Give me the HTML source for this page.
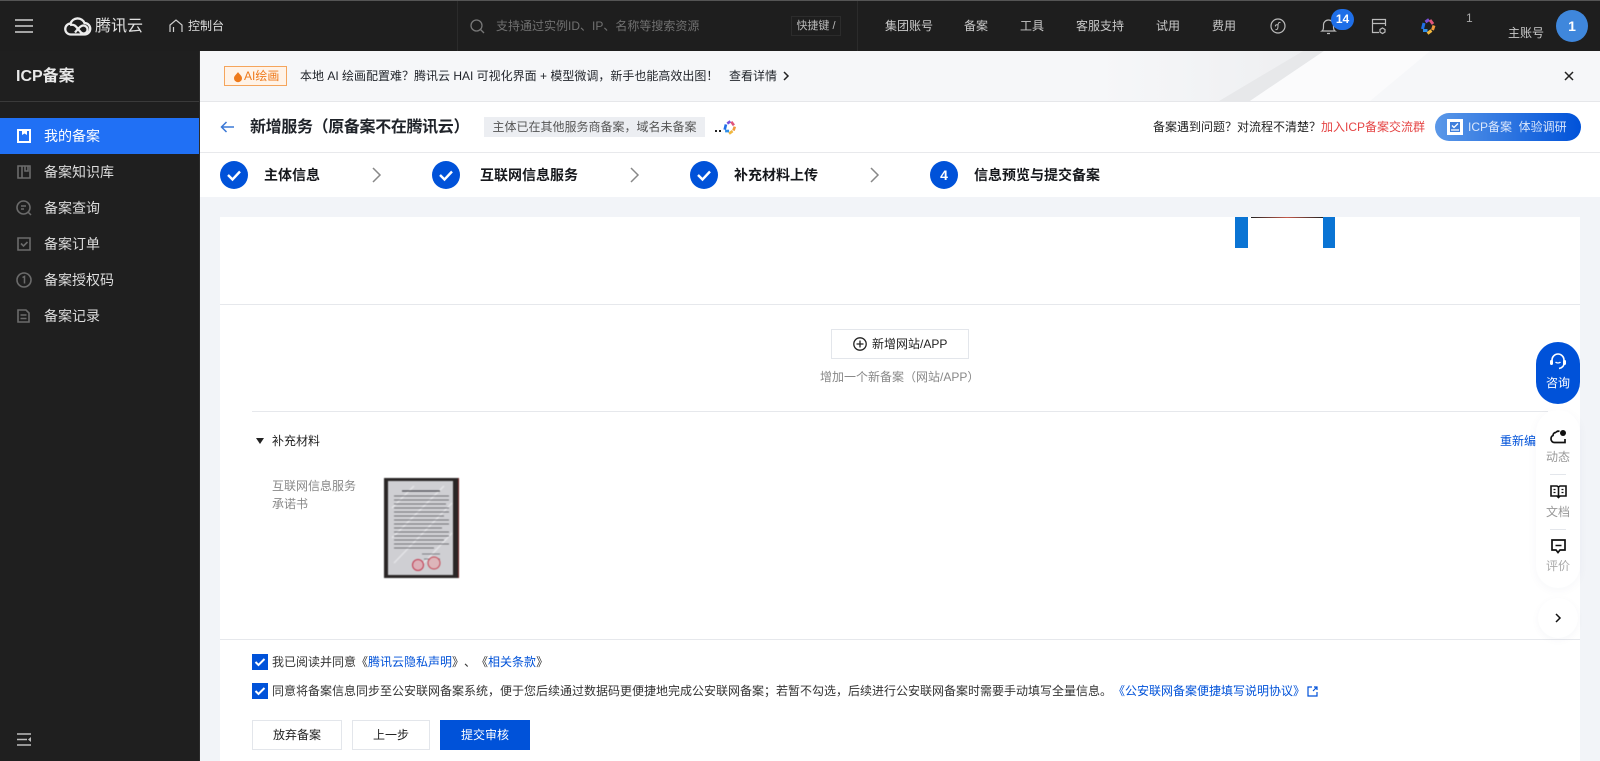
<!DOCTYPE html>
<html lang="zh-CN"><head><meta charset="utf-8"><title>ICP备案</title>
<style>
*{box-sizing:border-box}
html,body{margin:0;padding:0;width:1600px;height:761px;overflow:hidden;background:#f2f4f8;font-family:"Liberation Sans","Noto Sans CJK SC",sans-serif;color:#000;text-spacing-trim:space-all}
.t{position:absolute;white-space:nowrap;line-height:20px;font-size:12px}
.b{position:absolute}
svg{position:absolute;overflow:visible}
.nav{color:#c9c9c9;font-size:12px;top:16px}
.side{left:44px;font-size:14px;color:#dcdcdc}
.step{font-size:14px;font-weight:700;color:#16181c;top:165px}
.btn{position:absolute;top:720px;height:30px;background:#fff;border:1px solid #e3e6eb;font-size:12px;line-height:28px;text-align:center;color:#222}
.cb{position:absolute;left:252px;width:16px;height:16px;background:#0052d9}
a{color:#0052d9;text-decoration:none}
</style></head><body>

<!-- header -->
<div class="b" style="left:0;top:0;width:1600px;height:51px;background:#1e1e1e;border-top:1px solid #555"></div>
<div class="b" style="left:457px;top:1px;width:1px;height:50px;background:#2b2b2b"></div>
<div class="b" style="left:857px;top:1px;width:1px;height:50px;background:#2b2b2b"></div>
<svg style="left:15px;top:19px" width="18" height="14"><path d="M0 1h18M0 7h18M0 13h18" stroke="#d0d0d0" stroke-width="1.600" fill="none"/></svg>
<svg style="left:64px;top:16px" width="27" height="20" viewBox="0 0 27 20"><path d="M7 18.500a5.500 5.500 0 0 1-.5-11A7.500 7.500 0 0 1 20.500 7a5.700 5.700 0 0 1 0 11.500H7zM6 9c4-1 6 1 8 4l3 3.500c2 2 6 1 6.500-2.500.4-3-3-5.500-6-4-2 1-4 3.500-6.500 6.500" fill="none" stroke="#ececec" stroke-width="2.300"/></svg>
<div class="t" style="left:95px;top:17px;font-size:16px;color:#e0e0e0">腾讯云</div>
<svg style="left:169px;top:19px" width="14" height="14" viewBox="0 0 14 14"><path d="M1 13V6l6-5 6 5v7M4.500 13V8" fill="none" stroke="#cfcfcf" stroke-width="1.200"/></svg>
<div class="t" style="left:188px;top:16px;color:#dedede">控制台</div>
<svg style="left:470px;top:19px" width="15" height="15" viewBox="0 0 15 15"><circle cx="6.500" cy="6.500" r="5.500" fill="none" stroke="#777" stroke-width="1.300"/><path d="M10.500 10.500l3.500 3.500" stroke="#777" stroke-width="1.300"/></svg>
<div class="t" style="left:496px;top:16px;color:#707070">支持通过实例ID、IP、名称等搜索资源</div>
<div class="t" style="left:791px;top:16px;width:50px;height:20px;border:1px solid #2c2c2c;font-size:11px;color:#bbb;line-height:18px;text-align:center">快捷键 /</div>
<div class="t nav" style="left:885px">集团账号</div>
<div class="t nav" style="left:964px">备案</div>
<div class="t nav" style="left:1020px">工具</div>
<div class="t nav" style="left:1076px">客服支持</div>
<div class="t nav" style="left:1156px">试用</div>
<div class="t nav" style="left:1212px">费用</div>
<svg style="left:1270px;top:18px" width="16" height="16" viewBox="0 0 16 16"><circle cx="8" cy="8" r="7" fill="none" stroke="#bbb" stroke-width="1.200"/><path d="M10.500 4.500C8.500 4 8 5.500 8 8s-.5 4-2.500 3.500M5.500 8.500c-.5-1.500 1-2 2.500-1.500" fill="none" stroke="#bbb" stroke-width="1"/></svg>
<svg style="left:1321px;top:18px" width="15" height="17" viewBox="0 0 15 17"><path d="M1 13c1.500-1 1.500-2.500 1.500-6a5 5 0 0 1 10 0c0 3.500 0 5 1.500 6zM6 15.500h3" fill="none" stroke="#bbb" stroke-width="1.200"/></svg>
<div class="b" style="left:1331px;top:9px;width:23px;height:21px;border-radius:11px;background:#1f6fe8;color:#fff;font-size:12px;font-weight:700;line-height:21px;text-align:center">14</div>
<svg style="left:1371px;top:18px" width="17" height="17" viewBox="0 0 17 17"><path d="M14.500 8V1.500h-13v13H8M1.500 5.500h13M11.500 10l2.500 1.500v2.500L11.500 15.500 9 14v-2.500z" fill="none" stroke="#bbb" stroke-width="1.200"/></svg>
<svg style="left:1420px;top:18px" width="16" height="17" viewBox="0 0 16 17" fill="none" stroke-width="3"><path d="M9 1.500L5.500 4" stroke="#7a4fd8"/><path d="M10 2l3 4" stroke="#e0567a"/><path d="M14 7.500l-1.500 4.500" stroke="#f09a3e"/><path d="M11.500 12.500l-4 3" stroke="#f0b83e"/><path d="M7.500 12.500H3" stroke="#2f8fe8"/><path d="M2.500 11l1.500-6" stroke="#1f6fe8"/></svg>
<div class="t" style="left:1466px;top:8px;font-size:12px;color:#aaa">1</div>
<div class="t" style="left:1508px;top:23px;color:#c9c9c9">主账号</div>
<div class="b" style="left:1556px;top:10px;width:32px;height:32px;border-radius:50%;background:#3f87dc;color:#fff;font-size:14px;font-weight:700;line-height:32px;text-align:center">1</div>

<!-- sidebar -->
<div class="b" style="left:0;top:51px;width:199px;height:710px;background:#1f1f1f"></div>
<div class="b" style="left:199px;top:51px;width:1px;height:710px;background:#2c2c2c"></div>
<div class="t" style="left:16px;top:67px;font-size:16px;font-weight:700;color:#e8e8e8">ICP备案</div>
<div class="b" style="left:0;top:101px;width:199px;height:1px;background:#3a3a3a"></div>
<div class="b" style="left:0;top:118px;width:199px;height:36px;background:#2070f5"></div>
<svg style="left:17px;top:129px" width="14" height="14" viewBox="0 0 14 14"><path fill="#fff" fill-rule="evenodd" d="M0 0h14v14H0zM2 2v10h10V2h-2v4L7.500 4.500 5 6V2z"/></svg>
<div class="t side" style="top:126px;color:#fff">我的备案</div>
<svg style="left:17px;top:165px" width="14" height="14" viewBox="0 0 14 14"><path fill="none" stroke="#6b6b6b" stroke-width="1.600" d="M1 1h12v12H1zM5 1v12M8 1v5h3V1"/></svg>
<div class="t side" style="top:162px">备案知识库</div>
<svg style="left:16px;top:200px" width="16" height="16" viewBox="0 0 16 16"><circle cx="7.500" cy="7.500" r="6.500" fill="none" stroke="#6b6b6b" stroke-width="1.600"/><path d="M12 12l3 3M5 6h5M5 9h3" stroke="#6b6b6b" stroke-width="1.500"/></svg>
<div class="t side" style="top:198px">备案查询</div>
<svg style="left:17px;top:237px" width="14" height="14" viewBox="0 0 14 14"><path fill="none" stroke="#6b6b6b" stroke-width="1.600" d="M1 1h12v12H1zM4 6.500l2.500 2.500L10.500 5"/></svg>
<div class="t side" style="top:234px">备案订单</div>
<svg style="left:16px;top:272px" width="16" height="16" viewBox="0 0 16 16"><circle cx="8" cy="8" r="7" fill="none" stroke="#6b6b6b" stroke-width="1.600"/><path d="M6.500 5.500L8.500 4.500V11.500" fill="none" stroke="#6b6b6b" stroke-width="1.500"/></svg>
<div class="t side" style="top:270px">备案授权码</div>
<svg style="left:17px;top:309px" width="13" height="14" viewBox="0 0 13 14"><path fill="none" stroke="#6b6b6b" stroke-width="1.600" d="M1 1h8l3 3v9H1zM3.500 6h6M3.500 9.500h6"/></svg>
<div class="t side" style="top:306px">备案记录</div>
<svg style="left:17px;top:733px" width="14" height="13" viewBox="0 0 14 13"><path d="M0 1h14M0 6.500h10M0 12h14" stroke="#bdbdbd" stroke-width="1.400"/><path d="M14 4v5l-3-2.500z" fill="#bdbdbd"/></svg>

<!-- banner -->
<div class="b" style="left:200px;top:51px;width:1400px;height:51px;background:#f6f7f9;border-bottom:1px solid #e6e7ea;overflow:hidden">
<svg style="left:1000px;top:0" width="400" height="50"><defs><linearGradient id="g" x1="0" x2="1" y1="0" y2="0"><stop offset="0" stop-color="#f6f7f9"/><stop offset="1" stop-color="#eeeff1"/></linearGradient></defs><polygon points="-100,0 103,0 19,50 -100,50" fill="url(#g)"/><polygon points="103,0 124,0 50,50 19,50" fill="#e7e8ea"/><polygon points="124,0 230,0 170,50 50,50" fill="#fbfbfc"/></svg></div>
<div class="b" style="left:224px;top:66px;width:63px;height:20px;background:#fff3e8;border:1px solid #f5a55c;color:#ee7a1c;font-size:12px;line-height:18px;padding-left:7px;white-space:nowrap"><svg style="left:9px;top:5px" width="8" height="10" viewBox="0 0 8 10"><path d="M4 0c1 2 4 3.500 4 6.200A4 4 0 0 1 0 6.200C0 3.500 3 2 4 0z" fill="#ee7a1c"/></svg><span style="margin-left:12px">AI绘画</span></div>
<div class="t" style="left:300px;top:66px;color:#1f2329">本地 AI 绘画配置难？腾讯云 HAI 可视化界面 + 模型微调，新手也能高效出图！</div>
<div class="t" style="left:729px;top:66px;color:#1f2329">查看详情</div>
<svg style="left:783px;top:71px" width="6" height="10"><path d="M1 1l4 4-4 4" fill="none" stroke="#222" stroke-width="1.500"/></svg>
<svg style="left:1564px;top:71px" width="10" height="10"><path d="M1 1l8 8M9 1l-8 8" stroke="#222" stroke-width="1.500"/></svg>

<!-- page head -->
<div class="b" style="left:200px;top:102px;width:1400px;height:51px;background:#fff;border-bottom:1px solid #e8e9ec"></div>
<svg style="left:220px;top:121px" width="14" height="12"><path d="M14 6H1.500M6.500 1L1.500 6l5 5" fill="none" stroke="#3a78d6" stroke-width="1.500"/></svg>
<div class="t" style="left:250px;top:117px;font-size:16px;font-weight:700;color:#1f2329;line-height:22px;letter-spacing:-.35px">新增服务（原备案不在腾讯云）</div>
<div class="b" style="left:484px;top:117px;width:221px;height:20px;background:#eceef2;font-size:12px;color:#555;line-height:20px;text-align:center;white-space:nowrap">主体已在其他服务商备案，域名未备案</div>
<div class="b" style="left:715px;top:130px;width:2px;height:2px;background:#222"></div><div class="b" style="left:719px;top:130px;width:2px;height:2px;background:#222"></div>
<svg style="left:722px;top:120px" width="15" height="15" viewBox="0 0 16 17" fill="none" stroke-width="3"><path d="M9 1.500L5.500 4" stroke="#7a4fd8"/><path d="M10 2l3 4" stroke="#e0567a"/><path d="M14 7.500l-1.500 4.500" stroke="#f09a3e"/><path d="M11.500 12.500l-4 3" stroke="#f0b83e"/><path d="M7.500 12.500H3" stroke="#2f8fe8"/><path d="M2.500 11l1.500-6" stroke="#1f6fe8"/></svg>
<div class="t" style="left:1153px;top:117px;color:#222">备案遇到问题？对流程不清楚？</div>
<div class="t" style="left:1321px;top:117px;color:#e54545">加入ICP备案交流群</div>
<div class="b" style="left:1435px;top:113px;width:146px;height:28px;border-radius:14px;background:linear-gradient(90deg,#5b98e8,#0052d9)"></div>
<svg style="left:1447px;top:119px" width="16" height="16" viewBox="0 0 16 16"><rect width="16" height="16" fill="#fff"/><path d="M3 3h10v10H3z" fill="#3f7fdc"/><path d="M5 6.500l2 2 4-4M4 11h8" stroke="#fff" stroke-width="1.300" fill="none"/></svg>
<div class="t" style="left:1468px;top:117px;color:#dbe7fb">ICP备案&nbsp; 体验调研</div>

<!-- steps -->
<div class="b" style="left:200px;top:153px;width:1400px;height:44px;background:#fff"></div>
<svg style="left:220px;top:161px" width="28" height="28"><circle cx="14" cy="14" r="14" fill="#0052d9"/><path d="M8 14l4.500 4.500L20 10.500" fill="none" stroke="#fff" stroke-width="2.400"/></svg>
<div class="t step" style="left:264px">主体信息</div>
<svg style="left:372px;top:167px" width="9" height="16"><path d="M1 1l7 7-7 7" fill="none" stroke="#888" stroke-width="1.500"/></svg>
<svg style="left:432px;top:161px" width="28" height="28"><circle cx="14" cy="14" r="14" fill="#0052d9"/><path d="M8 14l4.500 4.500L20 10.500" fill="none" stroke="#fff" stroke-width="2.400"/></svg>
<div class="t step" style="left:480px">互联网信息服务</div>
<svg style="left:630px;top:167px" width="9" height="16"><path d="M1 1l7 7-7 7" fill="none" stroke="#888" stroke-width="1.500"/></svg>
<svg style="left:690px;top:161px" width="28" height="28"><circle cx="14" cy="14" r="14" fill="#0052d9"/><path d="M8 14l4.500 4.500L20 10.500" fill="none" stroke="#fff" stroke-width="2.400"/></svg>
<div class="t step" style="left:734px">补充材料上传</div>
<svg style="left:870px;top:167px" width="9" height="16"><path d="M1 1l7 7-7 7" fill="none" stroke="#888" stroke-width="1.500"/></svg>
<div class="b" style="left:930px;top:161px;width:28px;height:28px;border-radius:50%;background:#0052d9;color:#fff;font-size:14px;font-weight:700;line-height:28px;text-align:center">4</div>
<div class="t step" style="left:974px">信息预览与提交备案</div>

<!-- card -->
<div class="b" style="left:220px;top:217px;width:1360px;height:544px;background:#fff"></div>
<div class="b" style="left:1235px;top:217px;width:13px;height:31px;background:#0a74d4"></div>
<div class="b" style="left:1323px;top:217px;width:12px;height:31px;background:#0a74d4"></div>
<div class="b" style="left:1251px;top:217px;width:72px;height:1px;background:linear-gradient(90deg,#222,#c65a4a,#222)"></div>
<div class="b" style="left:220px;top:304px;width:1360px;height:1px;background:#e6e8ec"></div>
<div class="b" style="left:831px;top:329px;width:138px;height:30px;border:1px solid #e3e6eb;background:#fff"></div>
<svg style="left:853px;top:337px" width="14" height="14"><circle cx="7" cy="7" r="6.200" fill="none" stroke="#222" stroke-width="1.300"/><path d="M7 3.500v7M3.500 7h7" stroke="#222" stroke-width="1.300"/></svg>
<div class="t" style="left:872px;top:334px;color:#222">新增网站/APP</div>
<div class="t" style="left:820px;top:367px;color:#888">增加一个新备案（网站/APP）</div>
<div class="b" style="left:252px;top:411px;width:1296px;height:1px;background:#e6e8ec"></div>
<svg style="left:256px;top:438px" width="8" height="6"><path d="M0 0h8L4 6z" fill="#222"/></svg>
<div class="t" style="left:272px;top:431px;color:#222">补充材料</div>
<div class="t" style="left:1500px;top:431px;color:#0052d9">重新编</div>
<div class="t" style="left:272px;top:477px;color:#888;line-height:18px">互联网信息服务<br>承诺书</div>
<svg style="left:384px;top:478px" width="75" height="100" viewBox="0 0 75 100"><g style="filter:blur(.45px)"><rect width="75" height="100" fill="#2a2626"/><rect x="74" width="1" height="100" fill="#6b1f1f"/><rect x="4" y="3" width="65" height="94" fill="#cfcfd3"/><path d="M8 30L30 8M8 60L60 8M10 85L68 25M35 90L68 55" stroke="#e4e4e7" stroke-width="1.500"/><g stroke="#4a4a50" stroke-width=".9"><path d="M18 13h38" stroke-width="1.300"/><path d="M10 18h55M10 22h55M10 26h52M10 30h55M10 34h55M10 38h50M10 42h55M10 46h55M10 50h48M10 54h55M10 58h55M10 62h50M10 66h55M10 70h40" opacity=".7"/><path d="M38 76h18M40 81h16" opacity=".6"/></g><circle cx="34" cy="87" r="5.500" fill="#dcb0b8" stroke="#c23a50"/><circle cx="50" cy="85" r="6" fill="#ddb6ba" stroke="#c44a58"/></g></svg>

<div class="b" style="left:220px;top:639px;width:1360px;height:1px;background:#e6e8ec"></div>
<div class="cb" style="top:654px"><svg style="left:0;top:0" width="16" height="16"><path d="M3.500 8l3 3 6-6" fill="none" stroke="#fff" stroke-width="2"/></svg></div>
<div class="t" style="left:272px;top:652px;color:#333">我已阅读并同意《<a>腾讯云隐私声明</a>》、《<a>相关条款</a>》</div>
<div class="cb" style="top:683px"><svg style="left:0;top:0" width="16" height="16"><path d="M3.500 8l3 3 6-6" fill="none" stroke="#fff" stroke-width="2"/></svg></div>
<div class="t" style="left:272px;top:681px;color:#333">同意将备案信息同步至公安联网备案系统，便于您后续通过数据码更便捷地完成公安联网备案；若暂不勾选，后续进行公安联网备案时需要手动填写全量信息。</div>
<div class="t" style="left:1113px;top:681px;color:#0052d9">《公安联网备案便捷填写说明协议》</div>
<svg style="left:1307px;top:686px" width="11" height="11"><path d="M5 1H1v9h9V6M6 5l4-4M7 1h3v3" fill="none" stroke="#0052d9" stroke-width="1.200"/></svg>
<div class="btn" style="left:252px;width:90px">放弃备案</div>
<div class="btn" style="left:352px;width:78px">上一步</div>
<div class="btn" style="left:440px;width:90px;background:#0052d9;border-color:#0052d9;color:#fff">提交审核</div>

<!-- floating -->
<div class="b" style="left:1536px;top:342px;width:44px;height:62px;border-radius:22px;background:#0052d9"></div>
<svg style="left:1549px;top:353px" width="18" height="17" viewBox="0 0 18 17"><path d="M3 10V7a6 6 0 0 1 12 0v3c0 3-2 5-5 5.500" fill="none" stroke="#fff" stroke-width="1.600"/><rect x="1" y="7" width="3" height="5" rx="1.200" fill="#fff"/><rect x="14" y="7" width="3" height="5" rx="1.200" fill="#fff"/><path d="M6.500 9c1 1.300 4 1.300 5 0" fill="none" stroke="#fff" stroke-width="1.300"/></svg>
<div class="t" style="left:1546px;top:373px;color:#fff">咨询</div>
<div class="b" style="left:1536px;top:410px;width:44px;height:178px;border-radius:22px;background:#fff;box-shadow:0 2px 10px rgba(0,40,100,.04)"></div>
<svg style="left:1550px;top:429px" width="17" height="15" viewBox="0 0 17 15"><path d="M6 3.500C4 3.500 3 5 3 6.500 1.500 7 1 8.500 1 10c0 2 1.500 3.500 3.500 3.500H15V10" fill="none" stroke="#111" stroke-width="1.700"/><path d="M6 3.500C7 2 8.500 2 9.500 2.500" fill="none" stroke="#111" stroke-width="1.700"/><circle cx="13" cy="4" r="3" fill="#111"/></svg>
<div class="t" style="left:1546px;top:447px;color:#999">动态</div>
<div class="b" style="left:1550px;top:474px;width:16px;height:1px;background:#e3e6eb"></div>
<svg style="left:1550px;top:484px" width="17" height="15" viewBox="0 0 17 15"><path d="M1 2h6l1.500 1L10 2h6v10h-6l-1.500 1.500L7 12H1zM8.500 3v10" fill="none" stroke="#111" stroke-width="1.600"/><path d="M3.500 5.500h2M3.500 8.500h2M11.500 5.500h2M11.500 8.500h2" stroke="#111" stroke-width="1.300"/></svg>
<div class="t" style="left:1546px;top:502px;color:#999">文档</div>
<div class="b" style="left:1550px;top:529px;width:16px;height:1px;background:#e3e6eb"></div>
<svg style="left:1551px;top:539px" width="15" height="15" viewBox="0 0 15 15"><path d="M1 1h13v10H9l-2 2.500L5 11H1z" fill="none" stroke="#111" stroke-width="1.700"/><path d="M4.500 6.500h6" stroke="#111" stroke-width="1.500"/></svg>
<div class="t" style="left:1546px;top:556px;color:#aaa">评价</div>
<div class="b" style="left:1538px;top:598px;width:40px;height:40px;border-radius:50%;background:#fff;box-shadow:0 2px 8px rgba(0,40,100,.04)"></div>
<svg style="left:1555px;top:613px" width="6" height="10"><path d="M1 1l4 4-4 4" fill="none" stroke="#111" stroke-width="1.500"/></svg>
</body></html>
